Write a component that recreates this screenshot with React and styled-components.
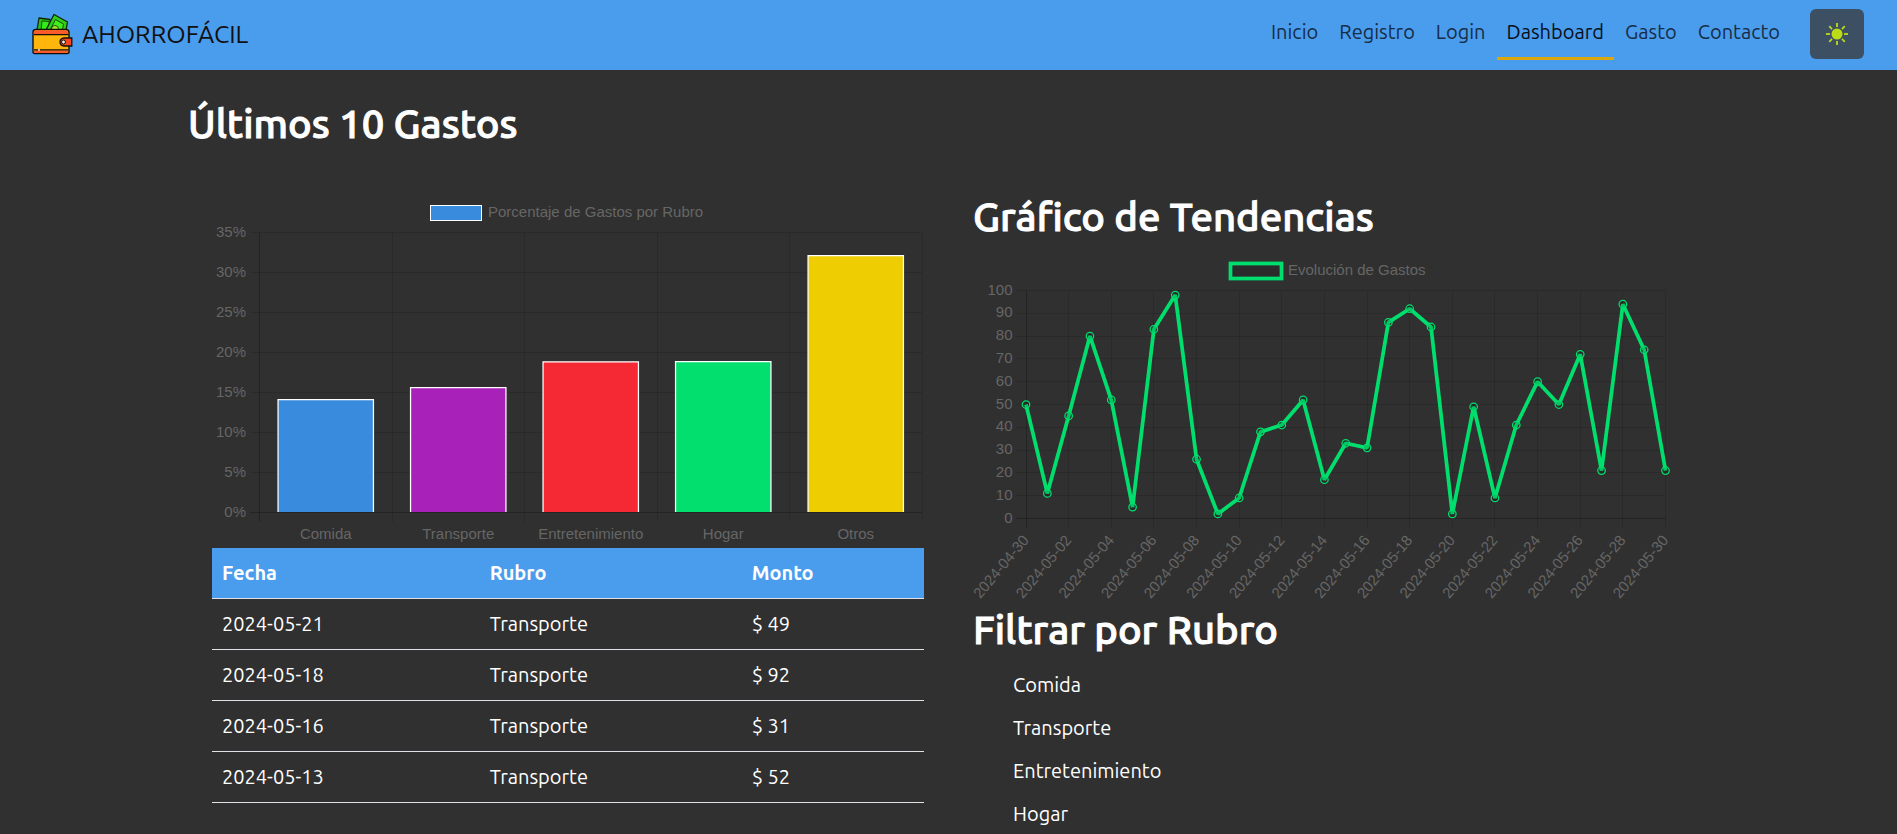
import React, { useState } from "react";
import styled, { createGlobalStyle } from "styled-components";

const GlobalStyle = createGlobalStyle`
  *, *::before, *::after { box-sizing: border-box; }
  body {
    margin: 0;
    background: #303030;
    color: #fff;
    font-family: Ubuntu, "Noto Sans", "Open Sans", sans-serif;
    font-size: 20px;
    line-height: 30px;
  }
`;

const Header = styled.header`
  display: flex;
  align-items: center;
  justify-content: space-between;
  padding: 7px 33px 10px 32px;
  background: #4a9ced;
`;

const Brand = styled.a`
  display: flex;
  align-items: center;
  gap: 9px;
  color: #111;
  font-size: 25px;
  text-decoration: none;
`;

const Menu = styled.div`
  display: flex;
  align-items: center;
  gap: 20px;
`;

const Nav = styled.nav`
  display: flex;
  gap: 1px;
`;

const NavLink = styled.a`
  padding: 10px;
  border-bottom: 3px solid ${(p) => (p.$active ? "#dca70a" : "transparent")};
  color: ${(p) => (p.$active ? "#07101a" : "#162d46")};
  text-decoration: none;
`;

const ThemeButton = styled.button`
  display: flex;
  align-items: center;
  justify-content: center;
  width: 54px;
  height: 50px;
  padding: 0;
  border: 0;
  border-radius: 6px;
  background: #3c4f63;
  cursor: pointer;
`;

const Page = styled.main`
  max-width: 1521px;
  margin: 0 auto;
  padding-top: 29px;
`;

const Heading = styled.h2`
  margin: 0;
  padding: 1px 0 9px;
  font-size: 40px;
  font-weight: 500;
  line-height: 48px;
  -webkit-text-stroke: 1px currentColor;
`;

const Columns = styled.div`
  display: grid;
  grid-template-columns: 1fr 1fr;
  gap: 49px;
  padding: 35px 24px 0;
`;

const Column = styled.section`
  min-width: 0;
`;

const Chart = styled.svg`
  display: block;
  width: 100%;
  height: auto;
  overflow: visible;
  font-family: "Liberation Sans", Arial, sans-serif;
  font-size: 15px;
  fill: #666;
`;

const BarSlot = styled.div`
  padding-top: 1px;
`;

const Table = styled.table`
  width: 100%;
  border-collapse: collapse;
  table-layout: fixed;
`;

const HeadCell = styled.th`
  width: ${(p) => p.$width};
  padding: 10px;
  border-bottom: 1px solid #dee2e6;
  background: #4a9ced;
  font-weight: 700;
  text-align: left;
`;

const Cell = styled.td`
  padding: 10px;
  border-bottom: 1px solid #dee2e6;
`;

const FilterList = styled.ul`
  display: flex;
  flex-direction: column;
  gap: 13px;
  margin: 0;
  padding: 7px 0 0 40px;
  list-style: none;
`;

const FilterButton = styled.button`
  display: block;
  padding: 0;
  border: 0;
  background: none;
  color: inherit;
  font: inherit;
  cursor: pointer;
`;

const links = ["Inicio", "Registro", "Login", "Dashboard", "Gasto", "Contacto"];

const bars = [
  { name: "Comida", value: 14.12, color: "#398cdd" },
  { name: "Transporte", value: 15.6, color: "#a821b8" },
  { name: "Entretenimiento", value: 18.83, color: "#f52933" },
  { name: "Hogar", value: 18.87, color: "#02df6e" },
  { name: "Otros", value: 32.1, color: "#eece02" },
];

const trend = [
  50, 11, 45, 80, 52, 5, 83, 98, 26, 2, 9, 38, 41, 52, 17, 33,
  31, 86, 92, 84, 2, 49, 9, 41, 60, 50, 72, 21, 94, 74, 21,
];

const expenses = [
  ["2024-05-21", "Transporte", 49],
  ["2024-05-18", "Transporte", 92],
  ["2024-05-16", "Transporte", 31],
  ["2024-05-13", "Transporte", 52],
];

const GRID = "rgba(0,0,0,0.12)";
const AXIS = "rgba(0,0,0,0.24)";

function WalletIcon() {
  return (
    <svg width="41" height="42" viewBox="0 0 41 42" aria-hidden="true">
      <g stroke="#12240a" strokeWidth="1.3" strokeLinejoin="round">
        <path d="M5 17 7 5l11 1.500 2 11z" fill="#23c412" />
        <path d="M9 17 10 8l7 .5 1 8" fill="#35ec1a" strokeWidth=".8" />
        <path d="m14 17 8-15.500 13.500 7.500L34 17z" fill="#2ed019" />
        <path d="m18 17 5.500-10.500 8 4.500-1 6" fill="#3df01c" strokeWidth=".8" />
        <circle cx="23" cy="16" r="3.500" fill="#a5ec2b" strokeWidth=".8" />
      </g>
      <path d="M1 19q0-2.500 3-2.500h30q3 0 3 3V39q0 1.500-2 1.500H2.500Q1 40.500 1 39z" fill="#ffb60c" stroke="#15100a" strokeWidth="1.400" />
      <path d="M2 19q0-1.800 2-1.800h30q2 0 2 2.300v1.500H2z" fill="#fb5a2b" />
      <path d="M2 37.500h34V39q0 1-1 1H3q-1 0-1-1z" fill="#fb5a2b" />
      <path d="M2 21.700h34.500M2 36.800h34.500" stroke="#15100a" strokeWidth="1.200" />
      <path d="M7 35.800v2.200" stroke="#ffd8c8" strokeWidth="1.500" />
      <path d="M32 25h7.800v8H32q-4-.5-4-4t4-4z" fill="#f9481f" stroke="#15100a" strokeWidth="1.300" />
      <circle cx="31.500" cy="29" r="2" fill="#f3e6dc" stroke="#15100a" />
    </svg>
  );
}

function SunIcon() {
  return (
    <svg width="22" height="22" viewBox="0 0 22 22" aria-hidden="true">
      <circle cx="11" cy="11" r="5.500" fill="#bddc18" />
      <g stroke="#bddc18" strokeWidth="1.800">
        {[0, 45, 90, 135, 180, 225, 270, 315].map((a) => (
          <path key={a} d="M11 0v4" transform={`rotate(${a} 11 11)`} />
        ))}
      </g>
    </svg>
  );
}

function BarChart() {
  const left = 47.5;
  const right = 710;
  const top = 39.5;
  const bottom = 319.5;
  const step = (right - left) / bars.length;
  const barWidth = step * 0.72;
  return (
    <Chart viewBox="0 0 712 355" role="img" aria-label="Porcentaje de Gastos por Rubro">
      <rect x="218.5" y="12.5" width="51" height="15" fill="#398cdd" stroke="#fff" />
      <text x="276" y="24">Porcentaje de Gastos por Rubro</text>
      {[0, 5, 10, 15, 20, 25, 30, 35].map((v) => (
        <g key={v}>
          <path d={`M38 ${bottom - v * 8}H${right}`} stroke={v ? GRID : AXIS} />
          <text x="34" y={bottom - v * 8 + 4.5} textAnchor="end">{v}%</text>
        </g>
      ))}
      {[0, 1, 2, 3, 4, 5].map((i) => (
        <path key={i} d={`M${Math.round(left + i * step - 0.5) + 0.5} ${top}V329`} stroke={i ? GRID : AXIS} />
      ))}
      {bars.map((b, i) => {
        const x = left + i * step + (step - barWidth) / 2;
        const y = bottom - b.value * 8;
        return (
          <g key={b.name}>
            <rect x={x} y={y} width={barWidth} height={bottom - y - 0.5} fill={b.color} />
            <path d={`M${x} ${bottom - 0.5}V${y}H${x + barWidth}V${bottom - 0.5}`} fill="none" stroke="#fff" strokeWidth="1.250" />
            <text x={left + (i + 0.5) * step} y="346" textAnchor="middle">{b.name}</text>
          </g>
        );
      })}
    </Chart>
  );
}

function TrendChart() {
  const left = 53;
  const right = 692.5;
  const top = 40.5;
  const bottom = 268.5;
  const px = (i) => left + (i * (right - left)) / (trend.length - 1);
  const py = (v) => bottom - (v * (bottom - top)) / 100;
  const snap = (n) => Math.round(n - 0.5) + 0.5;
  const dateLabel = (i) => (i === 0 ? "2024-04-30" : `2024-05-${String(i).padStart(2, "0")}`);
  return (
    <Chart viewBox="0 0 712 355" role="img" aria-label="Evolución de Gastos">
      <rect x="257.5" y="13.5" width="51" height="15" fill="rgba(0,0,0,0.1)" stroke="#00df6e" strokeWidth="3.750" />
      <text x="315" y="25">Evolución de Gastos</text>
      {[0, 10, 20, 30, 40, 50, 60, 70, 80, 90, 100].map((v) => (
        <g key={v}>
          <path d={`M43 ${snap(py(v))}H${right}`} stroke={v ? GRID : AXIS} />
          <text x="39.5" y={Math.round(py(v) + 4)} textAnchor="end">{v}</text>
        </g>
      ))}
      {trend.map((_, i) =>
        i % 2 ? null : (
          <g key={i}>
            <path d={`M${snap(px(i))} ${top}V278`} stroke={i ? GRID : AXIS} />
            <text transform={`translate(${px(i) + 3.5} 290.5) rotate(-50)`} textAnchor="end">{dateLabel(i)}</text>
          </g>
        )
      )}
      <polyline
        points={trend.map((v, i) => `${px(i)},${py(v)}`).join(" ")}
        fill="none"
        stroke="#00df6e"
        strokeWidth="3.750"
        strokeLinejoin="bevel"
      />
      {trend.map((v, i) => (
        <circle key={i} cx={px(i)} cy={py(v)} r="3.750" fill="rgba(0,0,0,0.1)" stroke="#00df6e" strokeWidth="1.250" />
      ))}
    </Chart>
  );
}

export default function App() {
  const [filter, setFilter] = useState("Transporte");
  return (
    <>
      <GlobalStyle />
      <Header>
        <Brand href="#inicio">
          <WalletIcon />
          AHORROFÁCIL
        </Brand>
        <Menu>
          <Nav aria-label="Principal">
            {links.map((name) => (
              <NavLink key={name} href={`#${name.toLowerCase()}`} $active={name === "Dashboard"}>
                {name}
              </NavLink>
            ))}
          </Nav>
          <ThemeButton type="button" aria-label="Cambiar tema">
            <SunIcon />
          </ThemeButton>
        </Menu>
      </Header>
      <Page>
        <Heading>Últimos 10 Gastos</Heading>
        <Columns>
          <Column>
            <BarSlot>
              <BarChart />
            </BarSlot>
            <Table>
              <thead>
                <tr>
                  <HeadCell $width="37.6%">Fecha</HeadCell>
                  <HeadCell $width="36.8%">Rubro</HeadCell>
                  <HeadCell>Monto</HeadCell>
                </tr>
              </thead>
              <tbody>
                {expenses.map(([date, category, amount]) => (
                  <tr key={date}>
                    <Cell>{date}</Cell>
                    <Cell>{category}</Cell>
                    <Cell>{`$ ${amount}`}</Cell>
                  </tr>
                ))}
              </tbody>
            </Table>
          </Column>
          <Column>
            <Heading>Gráfico de Tendencias</Heading>
            <TrendChart />
            <Heading>Filtrar por Rubro</Heading>
            <FilterList>
              {["Comida", "Transporte", "Entretenimiento", "Hogar"].map((name) => (
                <li key={name}>
                  <FilterButton type="button" aria-pressed={filter === name} onClick={() => setFilter(name)}>
                    {name}
                  </FilterButton>
                </li>
              ))}
            </FilterList>
          </Column>
        </Columns>
      </Page>
    </>
  );
}
